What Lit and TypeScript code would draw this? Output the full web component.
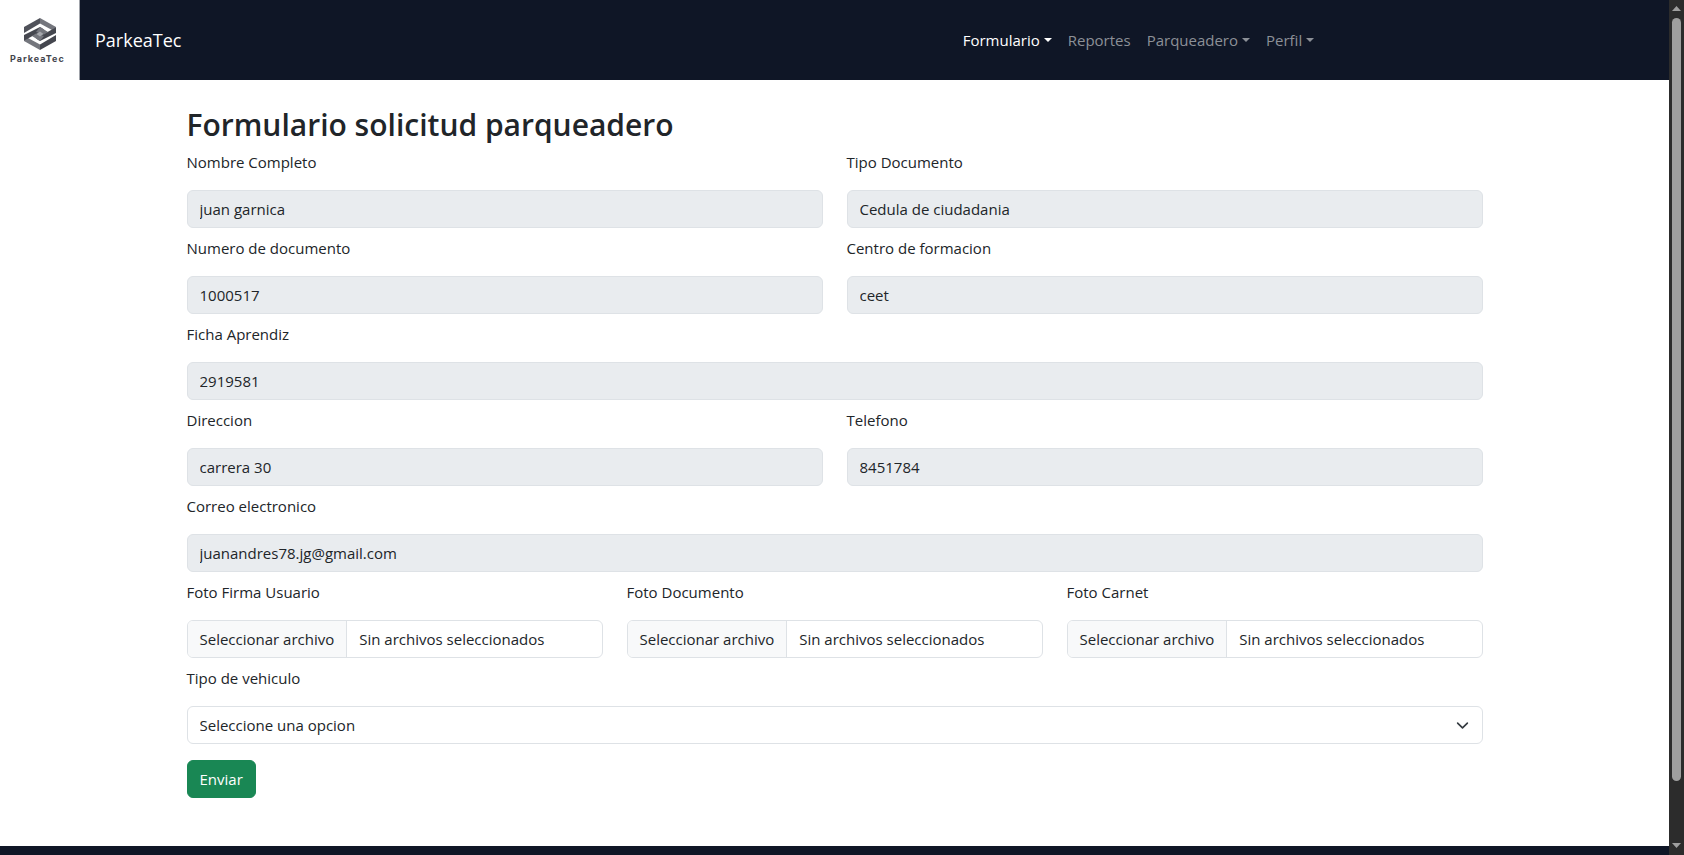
import { LitElement, html, css, svg } from "lit";
import { customElement } from "lit/decorators.js";

interface Field { id: string; label: string; value: string; span: number; type?: string }

const FIELDS: Field[] = [
  { id: "nombre", label: "Nombre Completo", value: "juan garnica", span: 3 },
  { id: "tipo-doc", label: "Tipo Documento", value: "Cedula de ciudadania", span: 3 },
  { id: "num-doc", label: "Numero de documento", value: "1000517", span: 3 },
  { id: "centro", label: "Centro de formacion", value: "ceet", span: 3 },
  { id: "ficha", label: "Ficha Aprendiz", value: "2919581", span: 6 },
  { id: "direccion", label: "Direccion", value: "carrera 30", span: 3 },
  { id: "telefono", label: "Telefono", value: "8451784", span: 3 },
  { id: "correo", label: "Correo electronico", value: "juanandres78.jg@gmail.com", span: 6, type: "email" },
];

const FILES = [
  { id: "firma", label: "Foto Firma Usuario" },
  { id: "foto-doc", label: "Foto Documento" },
  { id: "carnet", label: "Foto Carnet" },
];

const LINKS = [
  { text: "Formulario", menu: true, active: true },
  { text: "Reportes", menu: false, active: false },
  { text: "Parqueadero", menu: true, active: false },
  { text: "Perfil", menu: true, active: false },
];

// Hexagon of folded ribbons, with two open chevrons around a small diamond.
const mark = svg`
  <path fill="#50525a" d="M0 9 16 0v16L0 23z"/>
  <path fill="#74767d" d="M16 0l16 9v9l-16-2z"/>
  <path fill="#74767d" d="M0 17l16-1v16L0 23z"/>
  <path fill="#45474f" d="M32 14v9l-16 9V16z"/>
  <path fill="#fff" d="M0 15 16 5.500 28 12l-4 2.500-8-4.500L3 17l-3 1z"/>
  <path fill="#fff" d="M32 17 16 26.500 4 20l4-2.500 8 4.500 13-7 3-1z"/>
  <path fill="#45474f" d="M0 17 16 9l4 2.500L4 20.500l-4 2z"/>
  <path fill="#45474f" d="M32 15 16 23l-4-2.500L28 11.500l4-2z"/>
  <path fill="#74767d" d="M16 9l8 5-4 2.500-8-2.500z"/>
  <path fill="#74767d" d="M16 23l-8-5 4-2.500 8 2.500z"/>
  <path fill="#a5a7ac" d="M16 13.500l3.500 2.500-3.500 2.500-3.500-2.500z"/>`;

@customElement("app-root")
export class AppRoot extends LitElement {
  static styles = css`
    :host {
      display: grid;
      grid-template-columns: minmax(0, 1fr) 15px;
      height: 100vh;
      overflow: hidden;
      font: 15px/24px "Open Sans", "Noto Sans", sans-serif;
      color: #212529;
      background: #fff;
    }
    * { box-sizing: border-box; }
    .page { display: flex; flex-direction: column; overflow: hidden; }
    .navbar {
      display: grid;
      grid-template-columns: 57.2% 1fr;
      align-items: center;
      background: #0f1626;
    }
    .brand { display: flex; align-items: center; gap: 15px; color: #fff; font-size: 18px; text-decoration: none; }
    .logo { display: block; width: 80px; height: 80px; background: #fff; border-right: 1px solid #a0a3aa; }
    .logo-name { font: 700 9px Inter, sans-serif; letter-spacing: 1px; }
    .menu { display: flex; list-style: none; margin: 0; padding: 0; }
    .link { display: flex; align-items: center; gap: 4px; padding: 8px; color: #8c9097; text-decoration: none; }
    .link.active { color: #fff; }
    .caret { border: 4px solid transparent; border-top-color: currentColor; border-bottom: 0; }
    .content { width: 100%; max-width: 1320px; margin: 0 auto; padding: 24px 12px 48px; }
    .title { margin: 0 0 4px; font-size: 30px; font-weight: 600; line-height: 42px; }
    .form { display: grid; grid-template-columns: repeat(6, minmax(0, 1fr)); gap: 8px 24px; }
    .field { display: flex; flex-direction: column; gap: 16px; min-width: 0; }
    .span2 { grid-column: span 2; }
    .span3 { grid-column: span 3; }
    .span6 { grid-column: span 6; }
    .control {
      width: 100%; height: 38px; padding: 6px 12px; margin: 0;
      border: 1px solid #dee2e6; border-radius: 6px;
      background: #fff; color: inherit; font: inherit; appearance: none; outline: 0;
    }
    .control:disabled { background: #e9ecef; opacity: 1; }
    .file { position: relative; display: flex; padding: 0; overflow: hidden; }
    .file-input { position: absolute; inset: 0; width: 100%; opacity: 0; cursor: pointer; }
    .file-button { padding: 6px 12px; background: #f8f9fa; border-right: 1px solid #dee2e6; white-space: nowrap; }
    .file-text { padding: 6px 12px; white-space: nowrap; }
    .select-wrap { display: grid; align-items: center; }
    .select-wrap > * { grid-area: 1 / 1; }
    .chevron { justify-self: end; margin-right: 14px; width: 13px; height: 13px; pointer-events: none; }
    .submit {
      margin-top: 16px; padding: 6px 12px; height: 38px;
      border: 1px solid #198754; border-radius: 6px;
      background: #198754; color: #fff; font: inherit; cursor: pointer;
    }
    .footer { flex: 1; background: #0f1626; }
    .scrollbar {
      display: flex; flex-direction: column; align-items: center;
      padding: 6px 0; background: #2c2c2c;
    }
    .arrow { width: 9px; height: 6px; fill: #9f9f9f; }
    .track { flex: 1; display: flex; padding: 6px 0 0; }
    .thumb { width: 9px; height: 92.5%; border-radius: 5px; background: #9f9f9f; }
  `;

  render() {
    return html`
      <div class="page">
        <nav class="navbar">
          <a class="brand" href="#">
            <svg class="logo" viewBox="0 0 79 80" aria-hidden="true">
              <g transform="translate(24 18)">${mark}</g>
              <text class="logo-name" x="10" y="62" fill="#43454d">ParkeaTec</text>
            </svg>
            <span>ParkeaTec</span>
          </a>
          <ul class="menu">
            ${LINKS.map((l) => html`<li>
              <a class="link ${l.active ? "active" : ""}" href="#">${l.text}${l.menu ? html`<span class="caret"></span>` : ""}</a>
            </li>`)}
          </ul>
        </nav>
        <main class="content">
          <h2 class="title">Formulario solicitud parqueadero</h2>
          <form @submit=${(e: Event) => e.preventDefault()}>
            <div class="form">
              ${FIELDS.map((f) => html`<div class="field span${f.span}">
                <label for=${f.id}>${f.label}</label>
                <input class="control" id=${f.id} type=${f.type ?? "text"} .value=${f.value} disabled>
              </div>`)}
              ${FILES.map((f) => html`<div class="field span2">
                <label for=${f.id}>${f.label}</label>
                <div class="control file">
                  <span class="file-button">Seleccionar archivo</span>
                  <span class="file-text">Sin archivos seleccionados</span>
                  <input class="file-input" id=${f.id} type="file">
                </div>
              </div>`)}
              <div class="field span6">
                <label for="vehiculo">Tipo de vehiculo</label>
                <div class="select-wrap">
                  <select class="control" id="vehiculo"><option>Seleccione una opcion</option></select>
                  <svg class="chevron" viewBox="0 0 16 16" aria-hidden="true">
                    <path fill="none" stroke="#343a40" stroke-width="2" stroke-linecap="round" stroke-linejoin="round" d="m2 5 6 6 6-6"/>
                  </svg>
                </div>
              </div>
            </div>
            <button class="submit" type="submit">Enviar</button>
          </form>
        </main>
        <footer class="footer"></footer>
      </div>
      <div class="scrollbar" aria-hidden="true">
        <svg class="arrow" viewBox="0 0 9 6"><path d="M4.500 0 9 5H0z"/></svg>
        <div class="track"><div class="thumb"></div></div>
        <svg class="arrow" viewBox="0 0 9 6"><path d="M0 0h9L4.500 5z"/></svg>
      </div>`;
  }
}
